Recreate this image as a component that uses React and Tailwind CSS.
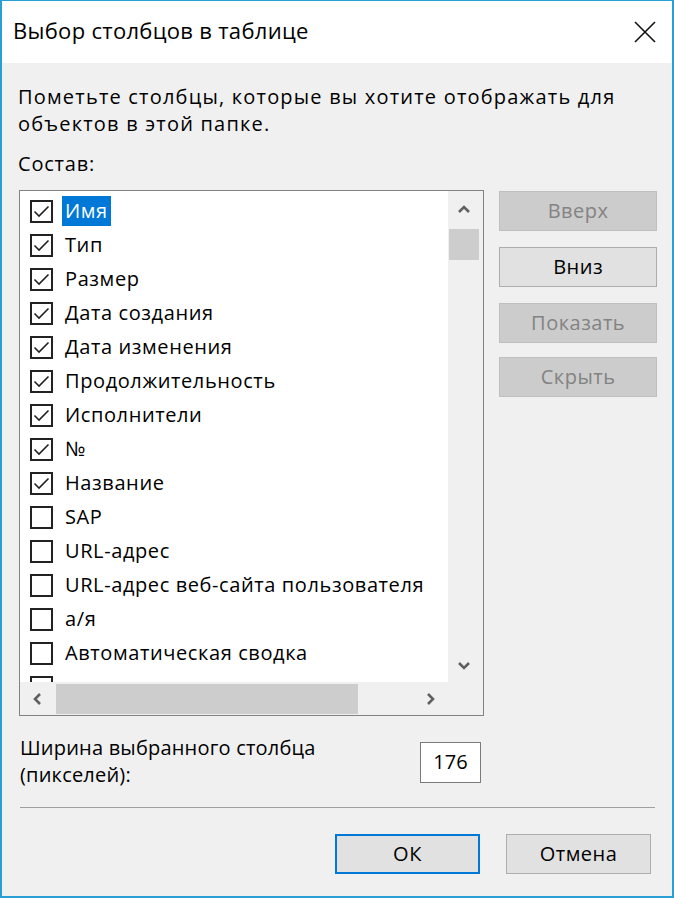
import React from 'react';

const items = [
  { name: 'Имя', checked: true, selected: true },
  { name: 'Тип', checked: true },
  { name: 'Размер', checked: true },
  { name: 'Дата создания', checked: true },
  { name: 'Дата изменения', checked: true },
  { name: 'Продолжительность', checked: true },
  { name: 'Исполнители', checked: true },
  { name: '№', checked: true },
  { name: 'Название', checked: true },
  { name: 'SAP', checked: false },
  { name: 'URL-адрес', checked: false },
  { name: 'URL-адрес веб-сайта пользователя', checked: false },
  { name: 'а/я', checked: false },
  { name: 'Автоматическая сводка', checked: false },
  // last row is scrolled under the horizontal bar, only its checkbox top shows
  { name: '', checked: false },
];

function Checkbox({ checked }) {
  return (
    <div className="w-[23px] h-[23px] border-2 border-[#222] bg-white flex items-center justify-center shrink-0">
      {checked && (
        <svg width="17" height="13" viewBox="0 0 17 13">
          <path d="M1.5 6.5 L6 11 L15.5 1.5" fill="none" stroke="#222" strokeWidth="1.6" />
        </svg>
      )}
    </div>
  );
}

function Chevron({ dir }) {
  const paths = {
    up: 'M2 9 L7 4 L12 9',
    down: 'M2 4 L7 9 L12 4',
    left: 'M9 2 L4 7 L9 12',
    right: 'M5 2 L10 7 L5 12',
  };
  return (
    <svg width="14" height="14" viewBox="0 0 14 14">
      <path d={paths[dir]} fill="none" stroke="#606060" strokeWidth="2.6" />
    </svg>
  );
}

function SideButton({ label, enabled }) {
  return (
    <div
      className={`h-[40px] flex items-center justify-center border text-[20px] tracking-[0.5px] ${
        enabled ? 'bg-[#e1e1e1] border-[#adadad] text-black' : 'bg-[#cccccc] border-[#bfbfbf] text-[#838383]'
      }`}
    >
      {label}
    </div>
  );
}

export default function App() {
  return (
    <div
      className="w-[674px] h-[898px] border-2 border-t border-[#2a9fd6] bg-[#f0f0f0] flex flex-col text-black"
      style={{ fontFamily: '"Open Sans", "Noto Sans", sans-serif' }}
    >
      {/* Title bar */}
      <div className="h-[62px] bg-white flex items-center justify-between pl-[11px] pr-[16px] shrink-0">
        <span className="text-[22px] tracking-[0.3px] leading-none pb-[4px]">Выбор столбцов в таблице</span>
        <svg width="22" height="22" viewBox="0 0 22 22">
          <path d="M1 1 L21 21 M21 1 L1 21" stroke="#111" strokeWidth="1.6" />
        </svg>
      </div>

      {/* Body */}
      <div className="flex-1 flex flex-col pl-[16px] pr-[15px]">
        <p className="text-[20px] tracking-[1.2px] leading-[27px] mt-[20px]">
          Пометьте столбцы, которые вы хотите отображать для объектов в этой папке.
        </p>
        <p className="text-[20px] tracking-[0.8px] leading-[27px] mt-[13px]">Состав:</p>

        <div className="flex mt-[13px] gap-[15px]">
          {/* List box */}
          <div className="w-[466px] ml-[1px] h-[526px] border border-[#828282] bg-white grid grid-cols-[1fr_35px] grid-rows-[1fr_33px]">
            <div className="overflow-hidden pt-[3px]">
              {items.map((it, i) => (
                <div key={i} className="h-[34px] flex items-center pl-[10px] gap-[9px] whitespace-nowrap">
                  <Checkbox checked={it.checked} />
                  {it.name && (
                    <span
                      className={`text-[20px] tracking-[0.6px] leading-[30px] px-[3px] ${
                        it.selected ? 'bg-[#0078d7] text-white' : ''
                      }`}
                    >
                      {it.name}
                    </span>
                  )}
                </div>
              ))}
            </div>
            {/* vertical scrollbar */}
            <div className="bg-[#f0f0f0] flex flex-col items-start pl-[1px]">
              <div className="h-[38px] w-[30px] flex items-center justify-center">
                <Chevron dir="up" />
              </div>
              <div className="w-[30px] h-[31px] bg-[#cdcdcd]" />
              <div className="flex-1" />
              <div className="h-[32px] w-[30px] flex items-center justify-center">
                <Chevron dir="down" />
              </div>
            </div>
            {/* horizontal scrollbar */}
            <div className="bg-[#f0f0f0] flex items-center">
              <div className="w-[36px] h-full flex items-center justify-center">
                <Chevron dir="left" />
              </div>
              <div className="w-[302px] h-[30px] bg-[#cdcdcd]" />
              <div className="flex-1" />
              <div className="w-[36px] h-full flex items-center justify-center">
                <Chevron dir="right" />
              </div>
            </div>
            <div className="bg-[#f0f0f0]" />
          </div>

          {/* Side buttons */}
          <div className="w-[158px] flex flex-col gap-[16px] pt-[1px]">
            <SideButton label="Вверх" />
            <SideButton label="Вниз" enabled />
            <div className="flex flex-col gap-[14px]">
              <SideButton label="Показать" />
              <SideButton label="Скрыть" />
            </div>
          </div>
        </div>

        {/* Width field */}
        <div className="flex items-center justify-between mt-[18px] w-[461px] ml-[2px]">
          <p className="text-[20px] tracking-[0.2px] leading-[27px]">
            Ширина выбранного столбца
            <br />
            (пикселей):
          </p>
          <div className="w-[61px] h-[41px] mt-[2px] bg-white border border-[#7a7a7a] flex items-center justify-center text-[20px]">
            176
          </div>
        </div>

        <div className="h-px bg-[#a0a0a0] mt-[19px] mr-[2px] ml-[2px]" />

        {/* Bottom buttons */}
        <div className="flex justify-end gap-[26px] mt-[26px] mr-[6px]">
          <div className="w-[145px] h-[40px] bg-[#e1e1e1] border-2 border-[#0078d7] flex items-center justify-center text-[20px] tracking-[0.5px]">
            ОК
          </div>
          <div className="w-[145px] h-[40px] bg-[#e1e1e1] border border-[#adadad] flex items-center justify-center text-[20px] tracking-[0.5px]">
            Отмена
          </div>
        </div>
      </div>
    </div>
  );
}
